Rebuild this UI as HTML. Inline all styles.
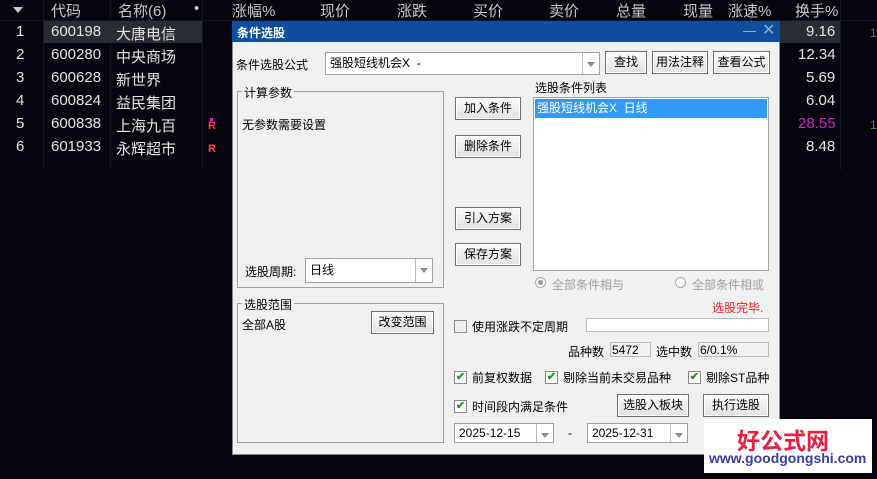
<!DOCTYPE html><html><head><meta charset="utf-8"><style>
*{margin:0;padding:0;box-sizing:border-box}
body{width:877px;height:479px;background:#05050d;position:relative;overflow:hidden;font-family:"Liberation Sans","Noto Sans CJK SC",sans-serif;}
.a{position:absolute;white-space:nowrap}
.h{color:#c8c8c8;font-size:15px;top:0}
.r{color:#e6e6e6;font-size:15px}
.d{font-size:12px;color:#000}
.btn{position:absolute;background:linear-gradient(#fafafa,#e2e2e2);border:1px solid #707070;font-size:12px;text-align:center;color:#000;box-shadow:inset 0 0 0 1px #fff}
.box{position:absolute;border:1px solid #a0a0a0;}
.inp{position:absolute;background:#fff;border:1px solid #a0a0a0;font-size:12px;padding-left:4px}
.cb{position:absolute;width:13px;height:13px;border:1px solid #8a8a8a;background:#fff;font-size:11px;color:#1a9a1a;line-height:11px;text-align:center;font-weight:bold}
.dd{position:absolute;right:0;top:0;bottom:0;width:17px;border-left:1px solid #c0c0c0}
.dd:after{content:"";position:absolute;left:4px;top:9px;border:4px solid transparent;border-top:5px solid #888}
.vl{position:absolute;top:0;width:1px;height:170px;background:#15151f}
</style></head><body>
<div class="vl" style="left:43px"></div><div class="vl" style="left:110px"></div><div class="vl" style="left:202px"></div><div class="vl" style="left:840px"></div>
<div class="a" style="left:0;top:20px;width:877px;height:1px;background:#15151f"></div>
<div class="a" style="left:13px;top:7px;border:5px solid transparent;border-top:6px solid #ccc"></div>
<div class="a h" style="left:51px">代码</div>
<div class="a h" style="left:118px">名称(6)</div>
<div class="a h" style="left:194px">•</div>
<div class="a h" style="left:232px">涨幅%</div>
<div class="a h" style="left:320px">现价</div>
<div class="a h" style="left:397px">涨跌</div>
<div class="a h" style="left:473px">买价</div>
<div class="a h" style="left:549px">卖价</div>
<div class="a h" style="left:616px">总量</div>
<div class="a h" style="left:683px">现量</div>
<div class="a h" style="left:728px">涨速%</div>
<div class="a h" style="left:795px">换手%</div>
<div class="a" style="left:44px;top:21px;width:158px;height:22px;background:#2a2c33"></div>
<div class="a" style="left:780px;top:21px;width:60px;height:22px;background:#2a2c33"></div>
<div class="a r" style="left:16px;top:23px">1</div><div class="a r" style="left:51px;top:23px">600198</div><div class="a r" style="left:116px;top:23px">大唐电信</div>
<div class="a r" style="left:16px;top:46px">2</div><div class="a r" style="left:51px;top:46px">600280</div><div class="a r" style="left:116px;top:46px">中央商场</div>
<div class="a r" style="left:16px;top:69px">3</div><div class="a r" style="left:51px;top:69px">600628</div><div class="a r" style="left:116px;top:69px">新世界</div>
<div class="a r" style="left:16px;top:92px">4</div><div class="a r" style="left:51px;top:92px">600824</div><div class="a r" style="left:116px;top:92px">益民集团</div>
<div class="a r" style="left:16px;top:115px">5</div><div class="a r" style="left:51px;top:115px">600838</div><div class="a r" style="left:116px;top:115px">上海九百</div>
<div class="a r" style="left:16px;top:138px">6</div><div class="a r" style="left:51px;top:138px">601933</div><div class="a r" style="left:116px;top:138px">永辉超市</div>
<div class="a" style="left:210px;top:118px;width:3px;height:3px;background:#f0f"></div>
<div class="a" style="left:208px;top:120px;color:#ff4040;font-size:11px;font-weight:bold">R</div>
<div class="a" style="left:208px;top:143px;color:#ff4040;font-size:11px;font-weight:bold">R</div>
<div class="a r" style="left:806px;top:23px">9.16</div>
<div class="a r" style="left:798px;top:46px">12.34</div>
<div class="a r" style="left:806px;top:69px">5.69</div>
<div class="a r" style="left:806px;top:92px">6.04</div>
<div class="a r" style="left:798px;top:115px;color:#d020d0">28.55</div>
<div class="a r" style="left:806px;top:138px">8.48</div>
<div class="a" style="left:870px;top:26px;color:#2a2;font-size:12px">1</div>
<div class="a" style="left:870px;top:118px;color:#2a2;font-size:12px">1</div>

<div class="a" style="left:232px;top:21px;width:548px;height:434px;background:#f0f0f0;border:1px solid #888"></div>
<div class="a" style="left:232px;top:21px;width:548px;height:21px;background:#0d4f9e"></div>
<div class="a" style="left:237px;top:24px;color:#fff;font-size:12px;font-weight:bold">条件选股</div>
<div class="a" style="left:743px;top:31px;width:13px;height:1px;background:#9ab"></div>
<div class="a" style="left:762px;top:20px;color:#9ab;font-size:16px">✕</div>

<div class="a d" style="left:236px;top:56px">条件选股公式</div>
<div class="inp" style="left:325px;top:52px;width:275px;height:23px;line-height:21px">强股短线机会X&nbsp; -<div class="dd"></div></div>
<div class="btn" style="left:605px;top:51px;width:42px;height:23px;line-height:21px">查找</div>
<div class="btn" style="left:652px;top:51px;width:56px;height:23px;line-height:21px">用法注释</div>
<div class="btn" style="left:713px;top:51px;width:57px;height:23px;line-height:21px">查看公式</div>

<div class="box" style="left:237px;top:91px;width:207px;height:197px"></div>
<div class="a d" style="left:242px;top:84px;background:#f0f0f0;padding:0 2px">计算参数</div>
<div class="a d" style="left:242px;top:116px">无参数需要设置</div>
<div class="a d" style="left:245px;top:263px">选股周期:</div>
<div class="inp" style="left:305px;top:258px;width:128px;height:25px;line-height:23px">日线<div class="dd"></div></div>

<div class="box" style="left:237px;top:303px;width:207px;height:140px"></div>
<div class="a d" style="left:242px;top:296px;background:#f0f0f0;padding:0 2px">选股范围</div>
<div class="a d" style="left:242px;top:316px">全部A股</div>
<div class="btn" style="left:371px;top:311px;width:63px;height:23px;line-height:21px">改变范围</div>

<div class="btn" style="left:455px;top:97px;width:66px;height:23px;line-height:21px">加入条件</div>
<div class="btn" style="left:455px;top:135px;width:66px;height:23px;line-height:21px">删除条件</div>
<div class="btn" style="left:455px;top:207px;width:66px;height:23px;line-height:21px">引入方案</div>
<div class="btn" style="left:455px;top:243px;width:66px;height:23px;line-height:21px">保存方案</div>

<div class="a d" style="left:535px;top:79px">选股条件列表</div>
<div class="a" style="left:533px;top:97px;width:236px;height:174px;background:#fff;border:1px solid #a0a0a0"></div>
<div class="a" style="left:535px;top:99px;width:232px;height:19px;background:#3399ff;color:#fff;font-size:12px;line-height:19px;padding-left:2px">强股短线机会X&nbsp; 日线</div>
<div class="a" style="left:535px;top:277px;width:11px;height:11px;border:1px solid #aaa;border-radius:50%;background:#fff"></div>
<div class="a" style="left:538px;top:280px;width:5px;height:5px;border-radius:50%;background:#999"></div>
<div class="a d" style="left:552px;top:276px;color:#a0a0a0">全部条件相与</div>
<div class="a" style="left:675px;top:277px;width:11px;height:11px;border:1px solid #aaa;border-radius:50%;background:#fff"></div>
<div class="a d" style="left:692px;top:276px;color:#a0a0a0">全部条件相或</div>
<div class="a d" style="left:712px;top:299px;color:#ff2020">选股完毕.</div>

<div class="cb" style="left:454px;top:320px;background:#eee"></div>
<div class="a d" style="left:472px;top:318px">使用涨跌不定周期</div>
<div class="a" style="left:586px;top:318px;width:183px;height:14px;background:#fff;border:1px solid #bbb"></div>
<div class="a d" style="left:568px;top:343px">品种数</div>
<div class="a d" style="left:610px;top:342px;width:41px;height:15px;border:1px solid #bbb;padding-left:1px">5472</div>
<div class="a d" style="left:656px;top:343px">选中数</div>
<div class="a d" style="left:698px;top:342px;width:71px;height:15px;border:1px solid #bbb;padding-left:1px">6/0.1%</div>

<div class="cb" style="left:454px;top:371px">✔</div><div class="a d" style="left:472px;top:369px">前复权数据</div>
<div class="cb" style="left:545px;top:371px">✔</div><div class="a d" style="left:563px;top:369px">剔除当前未交易品种</div>
<div class="cb" style="left:688px;top:371px">✔</div><div class="a d" style="left:706px;top:369px">剔除ST品种</div>
<div class="cb" style="left:454px;top:400px">✔</div><div class="a d" style="left:472px;top:398px">时间段内满足条件</div>
<div class="btn" style="left:617px;top:394px;width:72px;height:23px;line-height:21px">选股入板块</div>
<div class="btn" style="left:703px;top:394px;width:66px;height:23px;line-height:21px">执行选股</div>
<div class="inp" style="left:454px;top:423px;width:100px;height:20px;line-height:18px">2025-12-15<div class="dd" style="width:17px"></div></div>
<div class="a d" style="left:568px;top:426px">-</div>
<div class="inp" style="left:587px;top:423px;width:101px;height:20px;line-height:18px">2025-12-31<div class="dd"></div></div>

<div class="a" style="left:704px;top:419px;width:168px;height:54px;background:#fff"></div>
<div class="a" style="left:737px;top:422px;color:#e8213f;font-size:23px;font-weight:bold">好公式网</div>
<div class="a" style="left:709px;top:450px;color:#3a3aa8;font-size:14px;font-weight:bold">www.goodgongshi.com</div>
</body></html>
